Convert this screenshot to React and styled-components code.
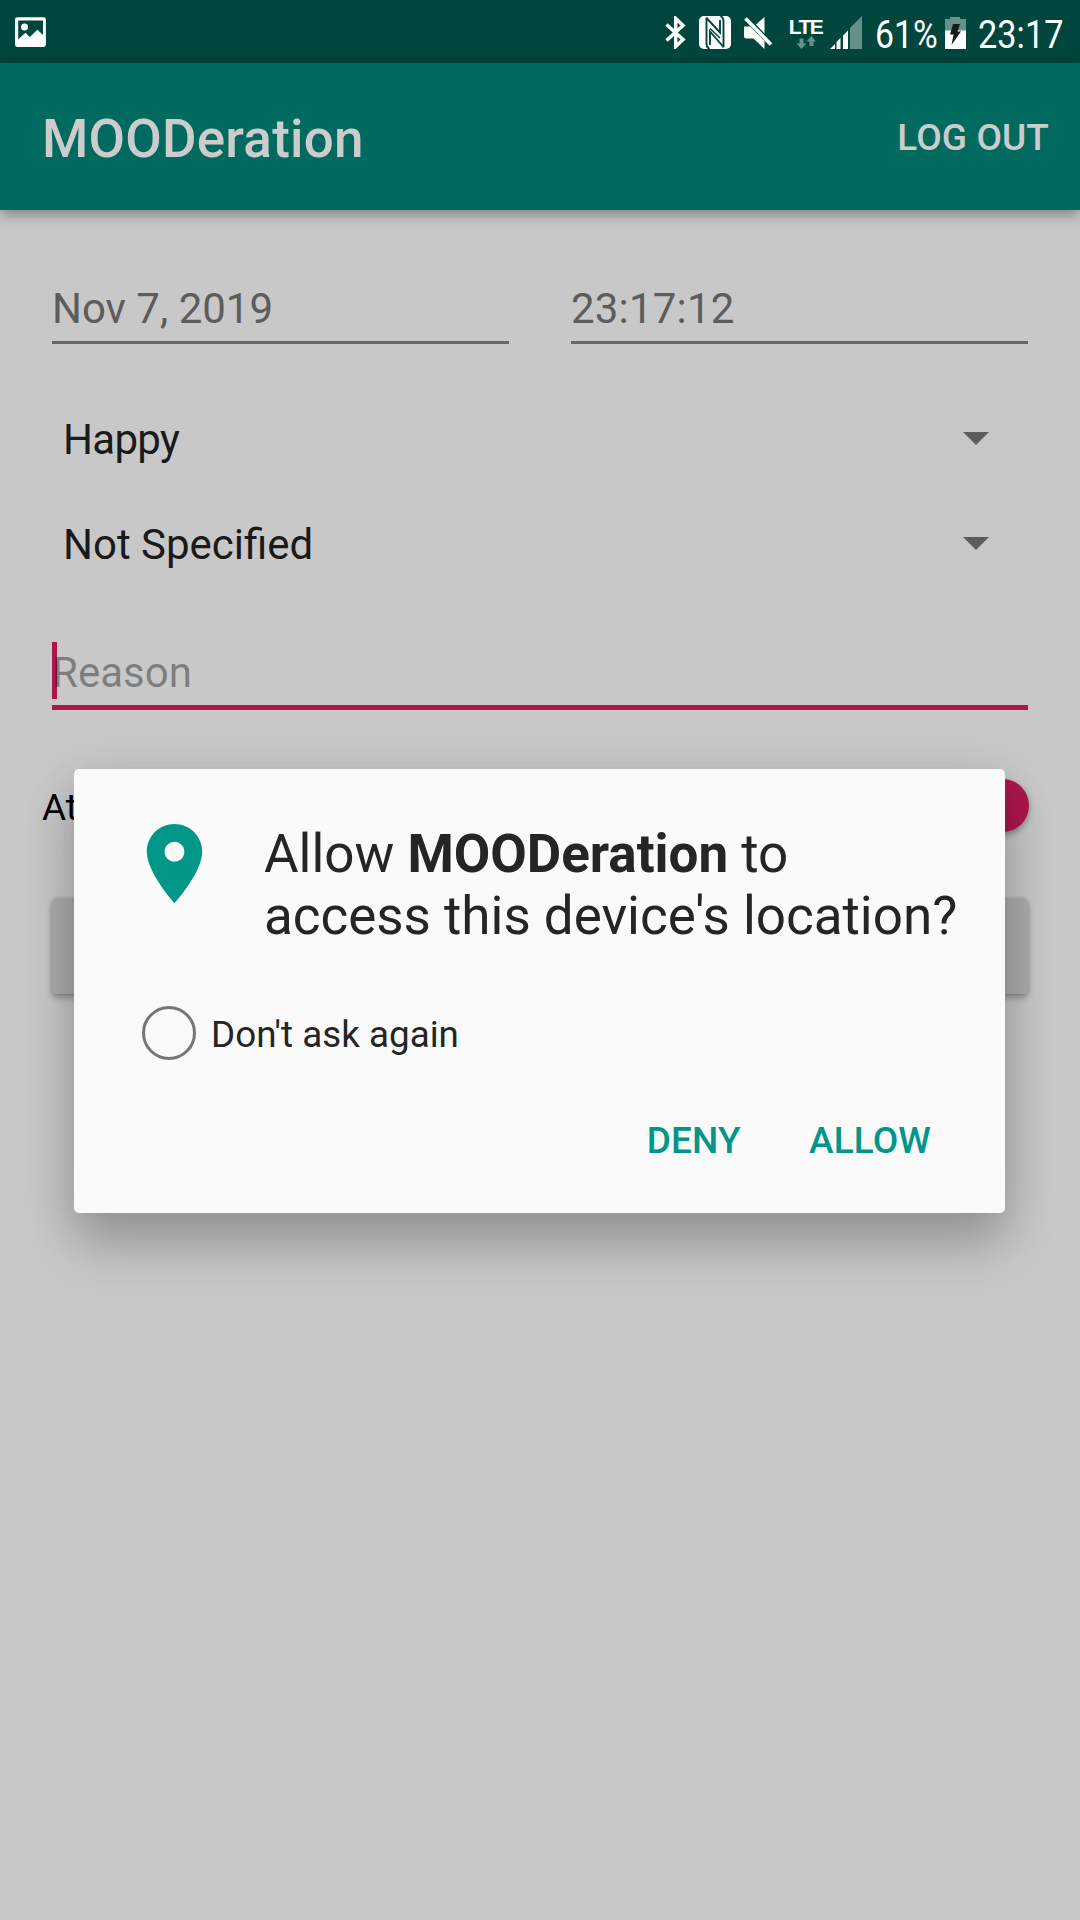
import React from "react";
import styled, { createGlobalStyle } from "styled-components";

const GlobalStyle = createGlobalStyle`
  * { box-sizing: border-box; }
  body { margin: 0; background: #c8c8c8; font-family: Roboto, "Noto Sans", sans-serif; }
`;

const Screen = styled.div`
  position: relative;
  width: 1080px;
  height: 1920px;
  overflow: hidden;
  background: #c8c8c8;
  display: flex;
  flex-direction: column;
`;

const StatusBar = styled.div`
  height: 63px;
  flex: none;
  background: #00463c;
  display: flex;
  justify-content: space-between;
  padding: 16px 16px 0 15px;
`;

const StatusIcons = styled.div`
  display: flex;
  align-items: flex-start;
`;

const Glyph = styled.svg`
  display: block;
  flex: none;
  margin-left: ${(p) => p.$gap || 0}px;
`;

const Network = styled.div`
  width: 34px;
  margin-left: 16px;
  display: flex;
  flex-direction: column;
  align-items: center;
`;

const NetworkLabel = styled.span`
  font-family: "Liberation Sans", sans-serif;
  font-size: 21px;
  font-weight: 700;
  letter-spacing: -1.5px;
  line-height: 19px;
  padding-top: 1px;
  margin-bottom: -1px;
  color: #fff;
`;

const StatusText = styled.span`
  flex: none;
  width: ${(p) => p.$width}px;
  margin-left: ${(p) => p.$gap}px;
  color: #fff;
  font-size: 39px;
  line-height: 39px;
  white-space: nowrap;
  transform: scaleX(${(p) => p.$squeeze});
  transform-origin: left center;
`;

const AppBar = styled.header`
  height: 147px;
  flex: none;
  background: #006a5f;
  box-shadow: 0 4px 13px rgba(0, 0, 0, 0.38);
  display: flex;
  align-items: center;
  justify-content: space-between;
  padding: 4px 31px 0 42px;
  color: #ccc;
  font-weight: 500;
`;

const AppTitle = styled.h1`
  margin: 0;
  font-size: 53px;
  letter-spacing: 0.2px;
  font-weight: 500;
`;

const LogOut = styled.span`
  font-size: 37px;
  letter-spacing: 0.1px;
  margin-top: -3px;
`;

const Form = styled.main`
  display: flex;
  flex-direction: column;
  padding: 74px 52px 0;
`;

const FieldRow = styled.div`
  display: flex;
  gap: 62px;
`;

const Field = styled.div`
  flex: 1;
  height: 60px;
  border-bottom: 3px solid #666;
  color: #5c5c5c;
  font-size: 42px;
  letter-spacing: ${(p) => p.$tracking || 0}px;
  line-height: 50px;
`;

const SpinnerList = styled.div`
  margin-top: 43px;
`;

const Spinner = styled.div`
  height: 105px;
  display: flex;
  align-items: center;
  justify-content: space-between;
  padding: 0 39px 0 11px;
  font-size: 42px;
  letter-spacing: ${(p) => p.$tracking || 0}px;
  color: #1a1a1a;
`;

const ReasonField = styled.div`
  height: 68px;
  margin-top: 45px;
  border-bottom: 5px solid #ad164d;
  display: flex;
  font-size: 42px;
  line-height: 62px;
  color: rgba(0, 0, 0, 0.38);
`;

const Caret = styled.span`
  width: 5px;
  height: 57px;
  margin-right: -5px;
  background: #ad164d;
`;

const Hint = styled.span`
  position: relative;
`;

const SwitchRow = styled.div`
  height: 53px;
  margin: 69px -1px 0 -10px;
  display: flex;
  align-items: center;
  justify-content: space-between;
  font-size: 37px;
  color: #000;
`;

const SwitchLabel = styled.span`
  margin-top: 3px;
`;

const Thumb = styled.span`
  width: 53px;
  height: 53px;
  border-radius: 50%;
  background: #ad164d;
  box-shadow: 0 3px 6px rgba(0, 0, 0, 0.35);
`;

const SubmitButton = styled.div`
  height: 96px;
  margin-top: 66px;
  border-radius: 5px;
  background: #abaead;
  box-shadow: 0 4px 6px rgba(0, 0, 0, 0.28), 0 0 3px rgba(0, 0, 0, 0.12);
`;

const Dialog = styled.section`
  position: absolute;
  left: 74px;
  top: 769px;
  width: 931px;
  height: 444px;
  border-radius: 5px;
  background: #fafafa;
  box-shadow: 0 36px 52px rgba(0, 0, 0, 0.18), 0 10px 48px rgba(0, 0, 0, 0.15);
  display: flex;
  flex-direction: column;
  color: #252525;
`;

const Prompt = styled.div`
  display: flex;
  padding: 47px 0 0 53px;
`;

const Question = styled.p`
  margin: 7px 0 0 42px;
  font-size: 53px;
  letter-spacing: -0.03px;
  line-height: 62px;
  white-space: nowrap;
`;

const AskAgain = styled.label`
  height: 54px;
  margin: 59px 0 0 68px;
  display: flex;
  align-items: center;
  gap: 15px;
  font-size: 36.8px;
`;

const AskAgainText = styled.span`
  margin-top: 2px;
`;

const Radio = styled.span`
  width: 54px;
  height: 54px;
  border: 3px solid #757575;
  border-radius: 50%;
`;

const Actions = styled.div`
  display: flex;
  justify-content: flex-end;
  gap: 68.5px;
  margin-top: 59px;
  padding-right: 74px;
  font-size: 37px;
  letter-spacing: 0.1px;
  line-height: 44px;
  font-weight: 500;
  color: #009688;
`;

const DropArrow = () => (
  <Glyph width="26" height="15" viewBox="0 0 26 15">
    <path d="M0 0h26L13 13z" fill="#5c5c5c" />
  </Glyph>
);

export default function App() {
  return (
    <>
      <GlobalStyle />
      <Screen>
        <StatusBar>
          <Glyph width="31" height="33" viewBox="0 0 31 33">
            <path
              fillRule="evenodd"
              fill="#fff"
              d="M2.5 1.3h26a2.4 2.4 0 0 1 2.4 2.4v24.9a2.4 2.4 0 0 1-2.4 2.4h-26A2.4 2.4 0 0 1 0 28.600V3.700a2.400 2.400 0 0 1 2.500-2.400zM3.200 4.600v18.700l7.300-6.500 4.300 4.300 7.600-7.300 5.600 5.300V4.600z"
            />
            <circle cx="9.500" cy="11" r="3.500" fill="#fff" />
          </Glyph>
          <StatusIcons>
            <Glyph width="21" height="33" viewBox="0 0 21 33">
              <path d="M1.500 8.500L18 23.500l-7.300 7V2.500l7.300 7L1.500 24.500" fill="none" stroke="#fff" strokeWidth="3.500" />
            </Glyph>
            <Glyph $gap={13} width="32" height="33" viewBox="0 0 32 33">
              <rect width="32" height="33" rx="5" fill="#fff" />
              <path d="M7.500 1.500V28q0 3.500 3 5M24.500 31.500V5q0-3.500-3-5" fill="none" stroke="#00463c" strokeWidth="1.900" />
              <path d="M7.500 2L21 16.500V4M24.500 31L11 15.500V29" fill="none" stroke="#00463c" strokeWidth="1.900" />
              <path d="M11 12.500L21 22" fill="none" stroke="#00463c" strokeWidth="1.500" />
            </Glyph>
            <Glyph $gap={12} width="30" height="33" viewBox="0 0 30 33">
              <path d="M1 10.500h6L21.500 25v8L10.500 22.500H3.500Q1 22.500 1 20zM13 8.500L21.500 1v16.500z" fill="#fff" />
              <path d="M2.500 2.500L28 28.500" stroke="#fff" strokeWidth="3.600" />
            </Glyph>
            <Network>
              <NetworkLabel>LTE</NetworkLabel>
              <Glyph width="20" height="14" viewBox="0 0 20 14">
                <path d="M3.500 3.500h4v5H10.500L5.500 14 .5 8.500h3zM13.500 11h4V6.500h2.500L15.500 1l-5 5.500h3z" fill="#66908a" />
              </Glyph>
            </Network>
            <Glyph $gap={7} width="32" height="33" viewBox="0 0 32 33">
              <path d="M20 12L32 0v33H20z" fill="#66908a" />
              <path d="M0 33l5-5v5zM6.500 33v-7l4-4v11zM13 33V19.500l5-5V33z" fill="#fff" />
            </Glyph>
            <StatusText $gap={13} $width={61} $squeeze={0.865}>61%</StatusText>
            <Glyph $gap={9.5} width="21" height="33" viewBox="0 0 21 33">
              <path d="M0 3h5V1h10v2h6v12H0z" fill="#66908a" />
              <path d="M0 14.500h21V33H0z" fill="#fff" />
              <path d="M8 8h7l-2.500 7.500H16L6.500 29l2-10.500H5z" fill="#1a1a1a" />
            </Glyph>
            <StatusText $gap={11.5} $width={86.5} $squeeze={0.88}>23:17</StatusText>
          </StatusIcons>
        </StatusBar>

        <AppBar>
          <AppTitle>MOODeration</AppTitle>
          <LogOut>LOG OUT</LogOut>
        </AppBar>

        <Form>
          <FieldRow>
            <Field>Nov 7, 2019</Field>
            <Field $tracking={0.2}>23:17:12</Field>
          </FieldRow>
          <SpinnerList>
            <Spinner $tracking={-0.7}>
              Happy
              <DropArrow />
            </Spinner>
            <Spinner>
              Not Specified
              <DropArrow />
            </Spinner>
          </SpinnerList>
          <ReasonField>
            <Caret />
            <Hint>Reason</Hint>
          </ReasonField>
          <SwitchRow>
            <SwitchLabel>At</SwitchLabel>
            <Thumb />
          </SwitchRow>
          <SubmitButton />
        </Form>

        <Dialog>
          <Prompt>
            <Glyph width="95" height="95" viewBox="0 0 24 24">
              <path
                fill="#009688"
                d="M12 2C8.130 2 5 5.130 5 9c0 5.250 7 13 7 13s7-7.750 7-13c0-3.870-3.130-7-7-7zm0 9.500c-1.380 0-2.500-1.120-2.500-2.500s1.120-2.500 2.500-2.500 2.500 1.120 2.500 2.500-1.120 2.500-2.500 2.500z"
              />
            </Glyph>
            <Question>
              Allow <b>MOODeration</b> to
              <br />
              access this device's location?
            </Question>
          </Prompt>
          <AskAgain>
            <Radio />
            <AskAgainText>Don't ask again</AskAgainText>
          </AskAgain>
          <Actions>
            <span>DENY</span>
            <span>ALLOW</span>
          </Actions>
        </Dialog>
      </Screen>
    </>
  );
}
